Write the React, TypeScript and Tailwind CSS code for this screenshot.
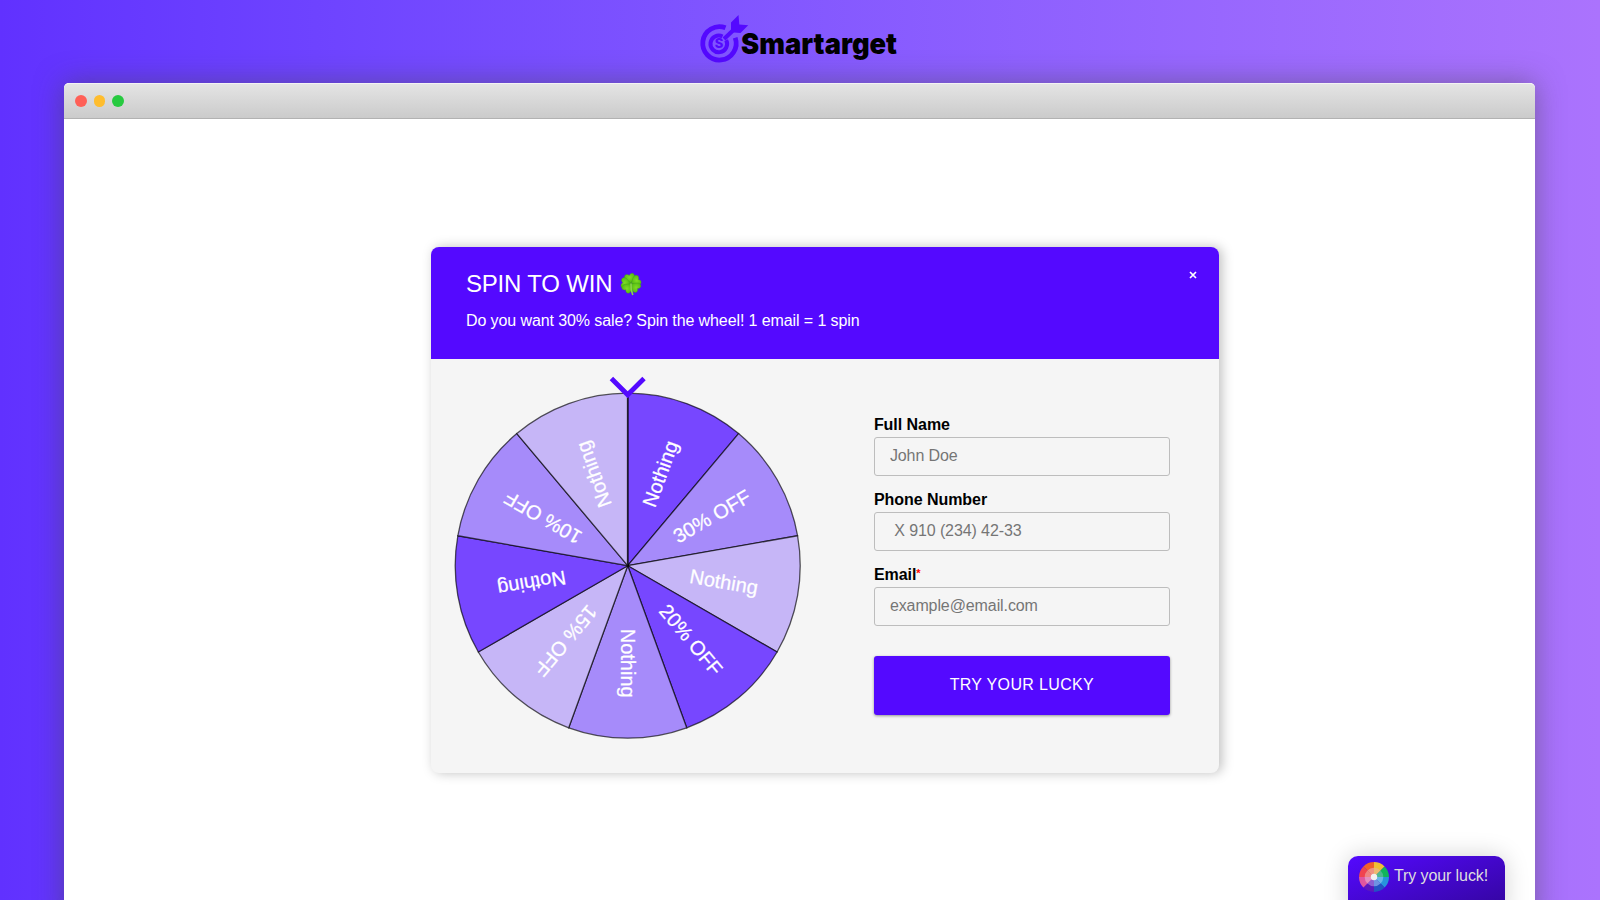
const SLICES = [
  { text: "Nothing", fill: "#7747ff" },
  { text: "30% OFF", fill: "#a68bfa" },
  { text: "Nothing", fill: "#c6b6f7" },
  { text: "20% OFF", fill: "#7747ff" },
  { text: "Nothing", fill: "#a68bfa" },
  { text: "15% OFF", fill: "#c6b6f7" },
  { text: "Nothing", fill: "#7747ff" },
  { text: "10% OFF", fill: "#a68bfa" },
  { text: "Nothing", fill: "#c6b6f7" },
];

const LUCK = ["#efbf35", "#10b45c", "#2694dc", "#2352c4", "#5a17bf", "#e0569f", "#f04450", "#f2602b"];
const LUCK_INNER = ["#ecb973", "#4cb890", "#6ab4ea", "#6e92e2", "#8c5ed2", "#e48fc0", "#ee8583", "#ee9482"];

function wedge(i: number, n: number, r: number) {
  const a = (i / n) * 2 * Math.PI - Math.PI / 2;
  const b = ((i + 1) / n) * 2 * Math.PI - Math.PI / 2;
  return `M0 0L${r * Math.cos(a)} ${r * Math.sin(a)}A${r} ${r} 0 0 1 ${r * Math.cos(b)} ${r * Math.sin(b)}Z`;
}

function Wheel() {
  return (
    <svg className="block h-[372px] w-[360px]" viewBox="-179.7 -191.700 360 372">
      {SLICES.map((s, i) => (
        <path key={i} d={wedge(i, 9, 172.5)} fill={s.fill} stroke="#000" strokeOpacity="0.65" strokeWidth="1.3" />
      ))}
      <path d="M0 0V-172" stroke="#000" strokeOpacity="0.45" strokeWidth="1.900" />
      {SLICES.map((s, i) => (
        <text
          key={i}
          transform={`rotate(${i * 40 - 70})`}
          x="97.500"
          y="6.200"
          textAnchor="middle"
          fontSize="20"
          fill="#fff"
          stroke="#fff"
          strokeWidth="0.250"
          fontFamily="Liberation Sans, Arial, sans-serif"
        >
          {s.text}
        </text>
      ))}
      <path d="M-16.300 -187.200L0 -170.900L16.300 -187.200" fill="none" stroke="#5409ff" strokeWidth="4.800" />
    </svg>
  );
}

function Logo() {
  return (
    <div className="flex h-[83px] justify-center">
      <svg className="block h-[83px] w-[220px]" viewBox="690 0 220 83">
        <g fill="none" stroke="#5409ff">
          <path d="M725.500 27.800A16.700 16.700 0 1 0 735.200 37.800" strokeWidth="4.800" />
          <path d="M722.500 36.500A8.300 8.300 0 1 0 726.200 40.200" strokeWidth="4" />
          <path d="M724 39L734 29.500" strokeWidth="4.200" />
        </g>
        <path d="M731 22.500L738.500 15L739.300 24.500L748.200 25.200L740.500 33L731 32.300Z" fill="#5409ff" />
        <text x="719" y="48.400" textAnchor="middle" fontSize="13" fontWeight="800" fill="#5409ff" fontFamily="Inter, sans-serif">S</text>
        <text
          x="741"
          y="53.700"
          textLength="156"
          lengthAdjust="spacingAndGlyphs"
          fontSize="29"
          fontWeight="900"
          fill="#000"
          fontFamily="Inter, sans-serif"
        >
          Smartarget
        </text>
      </svg>
    </div>
  );
}

function Clover() {
  const leaf = "M0 0C-2 -3 -6 -5 -5 -8C-4.200 -10.500 -1.500 -10.300 0 -8.300C1.500 -10.300 4.200 -10.500 5 -8C6 -5 2 -3 0 0Z";
  return (
    <svg className="h-6 w-6" viewBox="-12 -11.500 24 24">
      <defs>
        <radialGradient id="leaf" cx="0.5" cy="0.35" r="0.6">
          <stop offset="0" stopColor="#7fdc22" />
          <stop offset="1" stopColor="#4db512" />
        </radialGradient>
      </defs>
      {[-12, 62, 128, -84, -140].map((r) => (
        <path key={r} d={leaf} transform={`rotate(${r})`} fill="url(#leaf)" stroke="#3c9a14" strokeWidth="0.300" />
      ))}
      <path d="M0 0C-0.300 4 0.300 8 1.800 11.500" fill="none" stroke="#8ad64a" strokeWidth="1.600" />
    </svg>
  );
}

function Field({ label, placeholder, required }: { label: string; placeholder: string; required?: boolean }) {
  return (
    <label className="block h-[75px]">
      <span className="flex h-[18px] items-center text-base font-bold tracking-[-0.05px] text-black">
        {label}
        {required && <span className="-mt-1 text-[11px] text-[#ff0000]">*</span>}
      </span>
      <input
        placeholder={placeholder}
        className="mt-[3px] block h-[39px] w-full rounded-[3px] border border-[#bdbdbd] bg-transparent px-[15px] pb-px text-base tracking-[-0.1px] outline-none placeholder:text-[#757575]"
      />
    </label>
  );
}

export default function App() {
  return (
    <div className="h-[900px] overflow-hidden bg-linear-to-r from-[#6131ff] to-[#ab73fd] font-['Liberation_Sans',Arial,sans-serif]">
      <Logo />
      <div className="relative mr-[65px] ml-[63.500px] h-[840px] rounded-t-[5px] bg-white shadow-[0_0_28px_rgba(70,70,70,0.5)]">
        <div className="flex h-9 items-center gap-[7px] rounded-t-[5px] border-t border-b border-t-[#f3f3f3] border-b-[#b2b2b2] bg-linear-to-b from-[#e4e4e4] to-[#cbcbcb] pl-[11.500px]">
          <span className="size-[11.500px] rounded-full bg-[#ff6057]" />
          <span className="size-[11.500px] rounded-full bg-[#ffbd2e]" />
          <span className="size-[11.500px] rounded-full bg-[#27ca40]" />
        </div>

        <main className="mt-32 ml-[367px] h-[526px] w-[788.800px] rounded-lg bg-[#f5f5f5] shadow-[3px_0_12px_rgba(0,0,0,0.25)]">
          <header className="flex h-28 justify-between rounded-t-lg bg-[#5409ff] pr-[22px] pl-[35.500px] text-white">
            <div>
              <h1 className="mt-[22px] flex items-center gap-[7px] text-2xl leading-[30px] tracking-[-0.2px]">
                SPIN TO WIN <Clover />
              </h1>
              <p className="mt-[13px] text-base leading-[18px] tracking-[-0.1px]">
                Do you want 30% sale? Spin the wheel! 1 email = 1 spin
              </p>
            </div>
            <button aria-label="Close" className="mt-6 h-2">
              <svg className="block size-2" viewBox="0 0 8 8">
                <path d="M1 1L7 7M7 1L1 7" stroke="#fff" strokeWidth="1.700" />
              </svg>
            </button>
          </header>
          <div className="flex">
            <div className="mt-[15px] ml-[17px]">
              <Wheel />
            </div>
            <form className="mt-[57px] ml-[66.400px] w-[296px]">
              <Field label="Full Name" placeholder="John Doe" />
              <Field label="Phone Number" placeholder=" X 910 (234) 42-33" />
              <Field label="Email" placeholder="example@email.com" required />
              <button
                type="button"
                className="mt-[15px] h-[59px] w-full rounded-[3px] bg-[#5409ff] pb-px text-base tracking-[0.35px] text-white shadow-[0_1px_3px_rgba(0,0,0,0.4)]"
              >
                TRY YOUR LUCKY
              </button>
            </form>
          </div>
        </main>

        <button className="absolute top-[773px] left-[1284.500px] flex h-[60px] w-[157px] items-start rounded-t-[10px] bg-linear-to-br from-[#5409ff] to-[#320599] pt-[5px] pl-[11px] text-base tracking-[-0.1px] text-[#dedede] shadow-[0_0_24px_rgba(0,0,0,0.18)]">
          <svg className="mt-px size-[30px]" viewBox="-15 -15 30 30">
            {LUCK.map((c, i) => (
              <path key={c} d={wedge(i, 8, 15)} fill={c} />
            ))}
            {LUCK_INNER.map((c, i) => (
              <path key={c} d={wedge(i, 8, 9.3)} fill={c} />
            ))}
            <circle r="3.200" fill="#f1f1f1" />
          </svg>
          <span className="ml-[5px] leading-[29px]">Try your luck!</span>
        </button>
      </div>
    </div>
  );
}
